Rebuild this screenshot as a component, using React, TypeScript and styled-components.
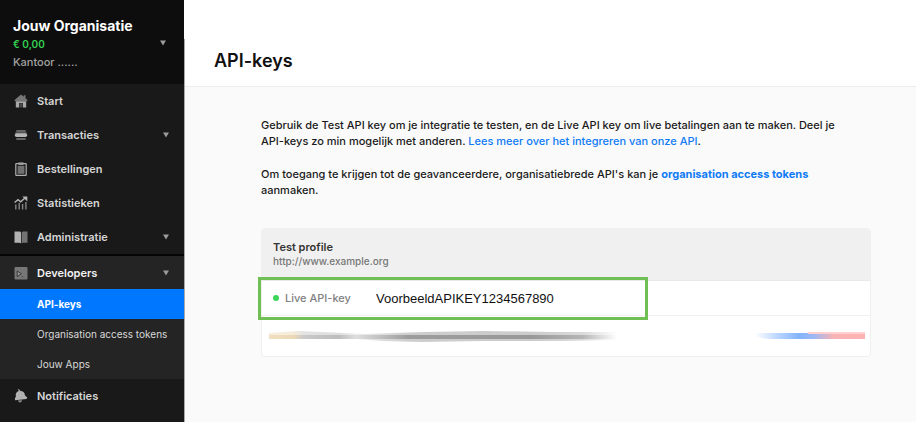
import React from "react";
import styled, { createGlobalStyle } from "styled-components";

const GlobalStyle = createGlobalStyle`
  *, *::before, *::after { box-sizing: border-box; }
  body {
    margin: 0;
    background: #fafafa;
    color: #1a1a1a;
    font-family: Inter, "Liberation Sans", sans-serif;
    font-weight: 500;
  }
  a { text-decoration: none; }
  button { border: 0; margin: 0; background: none; font: inherit; color: inherit; text-align: left; cursor: pointer; }
`;

const Page = styled.div`
  display: flex;
  min-height: 100vh;
`;

const Sidebar = styled.aside`
  display: flex;
  flex: 0 0 185px;
  padding-right: 1px;
  background: linear-gradient(#ffffff 39px, #a9a9a9 39px);
`;

const SidebarBody = styled.div`
  flex: 1;
  min-width: 0;
  background: #191919;
`;

const OrgSwitcher = styled.button`
  display: flex;
  width: 100%;
  height: 84px;
  align-items: center;
  justify-content: space-between;
  padding: 2px 17px 0 13px;
  background: #0d0d0d;
`;

const OrgText = styled.span`
  display: flex;
  flex-direction: column;
`;

const OrgName = styled.span`
  color: #ffffff;
  font-size: 14px;
  font-weight: 700;
  line-height: 20px;
`;

const OrgBalance = styled.span`
  color: #35d152;
  font-size: 10px;
  font-weight: 600;
  line-height: 17px;
`;

const OrgOffice = styled.span`
  color: #a2a2a2;
  font-size: 11px;
  line-height: 18px;
`;

const NavList = styled.ul`
  margin: 0;
  padding: 0;
  list-style: none;
`;

const NavGroup = styled.li`
  border-top: 2px solid #050505;
  background: #242424;
`;

const NavRow = styled.button<{ $bright?: boolean }>`
  display: flex;
  width: 100%;
  height: ${(p) => (p.$bright ? 33 : 34)}px;
  align-items: center;
  gap: 9px;
  padding: 0 14px;
  color: ${(p) => (p.$bright ? "#f2f2f2" : "#d6d6d6")};
  font-size: 11px;
  font-weight: 600;
`;

const NavLabel = styled.span`
  flex: 1;
`;

const Icon = styled.svg`
  flex: none;
  width: 14px;
  height: 14px;
`;

const Arrow = styled.svg`
  flex: none;
  width: 6px;
  height: 6px;
  margin-right: 1px;
  fill: #9b9b9b;
`;

const SubLink = styled.a<{ $active?: boolean }>`
  display: flex;
  height: 30px;
  align-items: center;
  padding-left: 37px;
  background: ${(p) => (p.$active ? "#0077ff" : "transparent")};
  color: ${(p) => (p.$active ? "#ffffff" : "#d8d8d8")};
  font-size: 10px;
  font-weight: ${(p) => (p.$active ? 700 : 400)};
  white-space: nowrap;
`;

const Main = styled.main`
  flex: 1;
  min-width: 0;
`;

const PageHeader = styled.header`
  padding: 48px 29px 13px;
  border-bottom: 1px solid #ececec;
  background: #ffffff;
`;

const Title = styled.h1`
  margin: 0;
  color: #111111;
  font-size: 18px;
  font-weight: 600;
  line-height: 25px;
`;

const Content = styled.div`
  padding: 30px 45px 64px 76px;
`;

const Paragraph = styled.p`
  margin: 0 0 17px;
  padding-right: 16px;
  font-size: 11px;
  line-height: 16px;
`;

const TextLink = styled.a<{ $strong?: boolean }>`
  color: #0f7bf5;
  font-weight: ${(p) => (p.$strong ? 700 : 500)};
`;

const Card = styled.section`
  margin-top: 30px;
  border: 1px solid #efefef;
  border-radius: 4px;
  background: #ffffff;
`;

const CardHeader = styled.header`
  padding: 11px 11px 12px;
  border-bottom: 1px solid #e9e9e9;
  border-radius: 3px 3px 0 0;
  background: #f0f0f0;
`;

const ProfileName = styled.h2`
  margin: 0;
  color: #333333;
  font-size: 11px;
  font-weight: 600;
  line-height: 15px;
`;

const ProfileUrl = styled.div`
  color: #777777;
  font-size: 10px;
  line-height: 13px;
`;

const KeyRow = styled.div`
  position: relative;
  display: flex;
  height: 35px;
  align-items: center;
  padding: 0 11px;
  border-bottom: 1px solid #f0f0f0;
`;

const StatusDot = styled.span`
  width: 6px;
  height: 6px;
  margin-right: 6px;
  border-radius: 50%;
  background: #3bd65a;
`;

const KeyLabel = styled.span`
  flex: 0 0 91px;
  color: #808080;
  font-size: 11px;
`;

const KeyValue = styled.span`
  color: #111111;
  font-family: "Liberation Sans", Arial, sans-serif;
  font-size: 13px;
  font-weight: 400;
`;

const Highlight = styled.span`
  position: absolute;
  top: -4px;
  left: -4px;
  width: 390px;
  height: 43px;
  border: 3px solid #70bf54;
  pointer-events: none;
`;

const HiddenRow = styled.div`
  display: flex;
  height: 40px;
  align-items: center;
  justify-content: space-between;
  padding: 0 5px 0 7px;
`;

const KeySmear = styled.svg`
  width: 348px;
  height: 16px;
`;

const ActionSmear = styled.svg`
  width: 110px;
  height: 16px;
`;

const DownArrow = () => (
  <Arrow viewBox="0 0 6 6" aria-hidden="true">
    <path d="M0 0.5h6L3 5.5z" />
  </Arrow>
);

const icons = {
  home: (
    <>
      <path d="M7 0.5 0.3 6.3l1 0.9h11.4l1-0.9-2.2-2V1.2H9.7v1.5z" fill="#777" />
      <path d="M1.8 7.2h10.4v6.3H9V9H5v4.5H1.8z" fill="#a8a8a8" />
      <path d="M5.3 9.2h3.4v4.3H5.3z" fill="#4a4a4a" />
    </>
  ),
  transactions: (
    <>
      <path d="M2.3 2.2h9.4v1.5H2.3zM2.3 10.3h9.4v1.5H2.3z" fill="#7d7d7d" />
      <rect x="1.2" y="4.4" width="11.6" height="1" fill="#777" />
      <rect x="0.8" y="5.2" width="12.4" height="3.8" rx="1.8" fill="#b5b5b5" />
    </>
  ),
  orders: (
    <>
      <rect x="1.8" y="1.6" width="10.4" height="11.8" rx="0.6" fill="none" stroke="#b0b0b0" strokeWidth="1.2" />
      <rect x="3.6" y="3.8" width="6.8" height="8" fill="#707070" />
      <rect x="4.5" y="0.4" width="5" height="2.5" fill="#a0a0a0" />
    </>
  ),
  stats: (
    <>
      <path d="M0.6 6.5 4 3.6l2.6 2.2L11 2" fill="none" stroke="#b5b5b5" strokeWidth="1.4" />
      <path d="M8.3 0.6h5v5z" fill="#b5b5b5" />
      <path d="M1.8 8.5v5M5.2 7v6.5M8.6 8v5.5M11.9 6v7.5" stroke="#858585" strokeWidth="1.4" />
    </>
  ),
  book: (
    <>
      <path d="M0.5 1.5h5q1.5 0 1.5 1.3v10.7Q6.5 12.7 5 12.7H0.5z" fill="#b2b2b2" />
      <path d="M13.5 1.5h-4.7Q7.7 1.7 7.7 2.8v10.7q0.5-0.8 1.7-0.8h4.1z" fill="#737373" />
    </>
  ),
  developers: (
    <>
      <rect x="0.5" y="1" width="13" height="12.4" rx="1" fill="#777" />
      <path d="M3.2 5v5.6L7.4 7.8z" fill="#9a9a9a" stroke="#303030" strokeWidth="0.9" />
      <path d="M7.2 10.8h3.2" stroke="#5a5a5a" strokeWidth="0.9" />
    </>
  ),
  bell: (
    <>
      <path d="M4 0.5 5 0 6 1.7C9.1 1.8 10.8 3.6 11 6.4l2.3 2.1-0.8 1.4-11.3 1.3-0.4-1.4 1.1-2.4C1.2 4.6 2.5 2.5 4.8 1.9z" fill="#b2b2b2" />
      <path d="M4 11.5 8 11q-0.3 2.6-2 2.6T4 11.5z" fill="#858585" />
    </>
  ),
};

type NavItemProps = {
  icon: keyof typeof icons;
  label: string;
  expandable?: boolean;
  bright?: boolean;
};

const NavItem = ({ icon, label, expandable, bright }: NavItemProps) => (
  <NavRow type="button" $bright={bright}>
    <Icon viewBox="0 0 14 14" aria-hidden="true">
      {icons[icon]}
    </Icon>
    <NavLabel>{label}</NavLabel>
    {expandable && <DownArrow />}
  </NavRow>
);

export default function App() {
  return (
    <>
      <GlobalStyle />
      <Page>
        <Sidebar>
          <SidebarBody>
            <OrgSwitcher type="button">
              <OrgText>
                <OrgName>Jouw Organisatie</OrgName>
                <OrgBalance>€ 0,00</OrgBalance>
                <OrgOffice>Kantoor ......</OrgOffice>
              </OrgText>
              <DownArrow />
            </OrgSwitcher>
            <nav>
              <NavList>
                <li><NavItem icon="home" label="Start" /></li>
                <li><NavItem icon="transactions" label="Transacties" expandable /></li>
                <li><NavItem icon="orders" label="Bestellingen" /></li>
                <li><NavItem icon="stats" label="Statistieken" /></li>
                <li><NavItem icon="book" label="Administratie" expandable /></li>
                <NavGroup>
                  <NavItem icon="developers" label="Developers" expandable bright />
                  <SubLink href="#api-keys" $active aria-current="page">API-keys</SubLink>
                  <SubLink href="#tokens">Organisation access tokens</SubLink>
                  <SubLink href="#apps">Jouw Apps</SubLink>
                </NavGroup>
                <li><NavItem icon="bell" label="Notificaties" /></li>
              </NavList>
            </nav>
          </SidebarBody>
        </Sidebar>
        <Main>
          <PageHeader>
            <Title>API-keys</Title>
          </PageHeader>
          <Content>
            <Paragraph>
              Gebruik de Test API key om je integratie te testen, en de Live API key om live betalingen
              aan te maken. Deel je API-keys zo min mogelijk met anderen.{" "}
              <TextLink href="#docs">Lees meer over het integreren van onze API</TextLink>.
            </Paragraph>
            <Paragraph>
              Om toegang te krijgen tot de geavanceerdere, organisatiebrede API's kan je{" "}
              <TextLink href="#tokens" $strong>organisation access tokens</TextLink> aanmaken.
            </Paragraph>
            <Card>
              <CardHeader>
                <ProfileName>Test profile</ProfileName>
                <ProfileUrl>http://www.example.org</ProfileUrl>
              </CardHeader>
              <KeyRow>
                <StatusDot />
                <KeyLabel>Live API-key</KeyLabel>
                <KeyValue>VoorbeeldAPIKEY1234567890</KeyValue>
                <Highlight />
              </KeyRow>
              <HiddenRow>
                <KeySmear viewBox="0 0 348 16" aria-hidden="true">
                  <defs>
                    <linearGradient id="keyInk">
                      <stop offset="0" stopColor="#f0dfc0" />
                      <stop offset="0.07" stopColor="#ecd9b4" />
                      <stop offset="0.1" stopColor="#c9c9c9" />
                      <stop offset="0.2" stopColor="#bdbdbd" />
                      <stop offset="0.25" stopColor="#dedede" />
                      <stop offset="0.4" stopColor="#9c9c9c" />
                      <stop offset="0.75" stopColor="#989898" />
                      <stop offset="0.9" stopColor="#b5b5b5" />
                      <stop offset="1" stopColor="#ffffff" />
                    </linearGradient>
                    <filter id="keySoft" x="-5%" y="-50%" width="110%" height="200%">
                      <feGaussianBlur stdDeviation="0.6" />
                    </filter>
                  </defs>
                  <g filter="url(#keySoft)">
                    <path d="M0 5 30 3l45 2 20 1 60-2 60-1 70 1 63 0v8l-55 1-80 0-60 1-40-1-25-2H0z" fill="url(#keyInk)" opacity="0.5" />
                    <path d="M0 7h348v4H0z" fill="url(#keyInk)" />
                  </g>
                </KeySmear>
                <ActionSmear viewBox="0 0 110 16" aria-hidden="true">
                  <defs>
                    <linearGradient id="actionInk">
                      <stop offset="0" stopColor="#ffffff" />
                      <stop offset="0.2" stopColor="#bcd7ff" />
                      <stop offset="0.4" stopColor="#84b4fb" />
                      <stop offset="0.53" stopColor="#9bb9f5" />
                      <stop offset="0.72" stopColor="#fab3b5" />
                      <stop offset="1" stopColor="#ffb3b3" />
                    </linearGradient>
                    <filter id="actionSoft" x="-5%" y="-50%" width="110%" height="200%">
                      <feGaussianBlur stdDeviation="0.5" />
                    </filter>
                  </defs>
                  <g filter="url(#actionSoft)">
                    <path d="M0 5h110v6H14L0 9z" fill="url(#actionInk)" />
                    <path d="M53 4h57v2H53z" fill="#ffd0d0" />
                  </g>
                </ActionSmear>
              </HiddenRow>
            </Card>
          </Content>
        </Main>
      </Page>
    </>
  );
}
